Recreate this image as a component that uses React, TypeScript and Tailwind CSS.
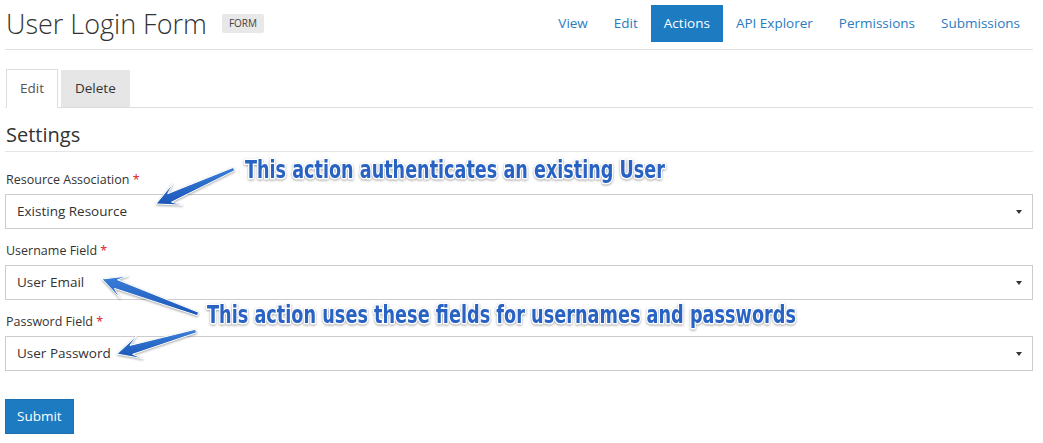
import React from "react";

type Pt = [number, number];

// Skitch-style tapered arrow: thin tail, widening shaft, swept head
function arrowPoints(tail: Pt, tip: Pt, headLen = 24, headHalf = 12): string {
  const dx = tip[0] - tail[0];
  const dy = tip[1] - tail[1];
  const len = Math.hypot(dx, dy);
  const d: Pt = [dx / len, dy / len];
  const n: Pt = [-d[1], d[0]];
  const at = (base: Pt, along: number, side: number): Pt => [
    base[0] + d[0] * along + n[0] * side,
    base[1] + d[1] * along + n[1] * side,
  ];
  const pts: Pt[] = [
    at(tail, 0, 1.8),
    at(tip, -headLen * 0.62, 4.6),
    at(tip, -headLen, headHalf),
    tip,
    at(tip, -headLen, -headHalf),
    at(tip, -headLen * 0.62, -4.6),
    at(tail, 0, -1.8),
  ];
  return pts.map((p) => `${p[0].toFixed(1)},${p[1].toFixed(1)}`).join(" ");
}

const navItems = ["View", "Edit", "Actions", "API Explorer", "Permissions", "Submissions"];

const fields = [
  { label: "Resource Association", value: "Existing Resource" },
  { label: "Username Field", value: "User Email" },
  { label: "Password Field", value: "User Password" },
];

function SelectBox({ value }: { value: string }) {
  return (
    <div className="flex items-center justify-between h-[35px] border border-[#cccccc] bg-white pl-[11px] pr-[10px]">
      <span className="text-[13.5px] text-[#333333]">{value}</span>
      <span className="w-0 h-0 border-x-[3.5px] border-t-[4px] border-x-transparent border-t-[#333333]" />
    </div>
  );
}

export default function App() {
  const annoFont = '"Liberation Sans Narrow", "DejaVu Sans Condensed", Roboto, sans-serif';
  return (
    <div
      className="relative w-[1043px] h-[443px] overflow-hidden bg-white text-[#333333]"
      style={{ fontFamily: '"Open Sans", sans-serif' }}
    >
      <div className="ml-[5px] mr-[10px]">
        {/* Header */}
        <div className="flex items-center justify-between pt-[5px] pb-[7px] border-b border-[#e0e0e0]">
          <div className="flex items-center pl-px">
            <h1 className="text-[27px] leading-[33px] font-light text-[#333333]">User Login Form</h1>
            <span className="ml-[15px] px-[7px] h-[19px] flex items-center rounded-[2px] bg-[#e8e8e8] text-[10px] text-[#444444]">
              FORM
            </span>
          </div>
          <nav className="flex">
            {navItems.map((item) => (
              <span
                key={item}
                className={
                  item === "Actions"
                    ? "px-[13px] h-[37px] flex items-center text-[13.5px] bg-[#1d7bc1] text-white"
                    : "px-[13px] h-[37px] flex items-center text-[13.5px] text-[#2a7bbf]"
                }
              >
                {item}
              </span>
            ))}
          </nav>
        </div>

        {/* Tabs */}
        <div className="mt-[19px] flex items-end border-b border-[#dddddd] pl-px">
          <div className="-mb-px h-[39px] px-[13px] flex items-center border border-[#dddddd] border-b-white bg-white text-[13.5px] text-[#555555]">
            Edit
          </div>
          <div className="ml-[3px] h-[37px] px-[14px] flex items-center bg-[#e6e6e6] text-[13.5px] text-[#333333]">
            Delete
          </div>
        </div>

        {/* Settings */}
        <h2 className="mt-[14px] pl-px pb-[3px] text-[20px] leading-[26px] border-b border-[#e5e5e5] text-[#333333]">
          Settings
        </h2>

        <div className="mt-[19px]">
          {fields.map((f) => (
            <div key={f.label} className="mb-[13px]">
              <div className="mb-[5px] pl-px text-[12.5px] leading-[18px] text-[#333333]">
                {f.label} <span className="text-[#e0201f]">*</span>
              </div>
              <SelectBox value={f.value} />
            </div>
          ))}
        </div>

        <button className="mt-[15px] h-[35px] px-[11px] bg-[#1d7bc1] text-white text-[13.5px] border border-[#1a70b0]">
          Submit
        </button>
      </div>

      {/* Annotation overlay */}
      <svg
        className="absolute inset-0 pointer-events-none drop-shadow-[0_1px_1px_rgba(0,0,0,0.35)]"
        width={1043}
        height={443}
        viewBox="0 0 1043 443"
      >
        <defs>
          <linearGradient id="arrowFill" x1="0" y1="0" x2="0" y2="1">
            <stop offset="0" stopColor="#3b7fd8" />
            <stop offset="1" stopColor="#1b56b8" />
          </linearGradient>
        </defs>
        <g fill="url(#arrowFill)" stroke="#ffffff" strokeWidth={1} strokeLinejoin="round">
          <polygon points={arrowPoints([234, 169], [156, 204])} />
          <polygon points={arrowPoints([198, 314], [102, 279])} />
          <polygon points={arrowPoints([196, 331], [117, 354])} />
        </g>
        <g
          fill="#2862c2"
          stroke="#ffffff"
          strokeWidth={3}
          strokeLinejoin="round"
          paintOrder="stroke"
          fontWeight={700}
          fontSize={24}
          style={{ fontFamily: annoFont }}
        >
          <text x={245} y={178} textLength={420} lengthAdjust="spacingAndGlyphs">
            This action authenticates an existing User
          </text>
          <text x={207} y={323} textLength={589} lengthAdjust="spacingAndGlyphs">
            This action uses these fields for usernames and passwords
          </text>
        </g>
      </svg>
    </div>
  );
}
